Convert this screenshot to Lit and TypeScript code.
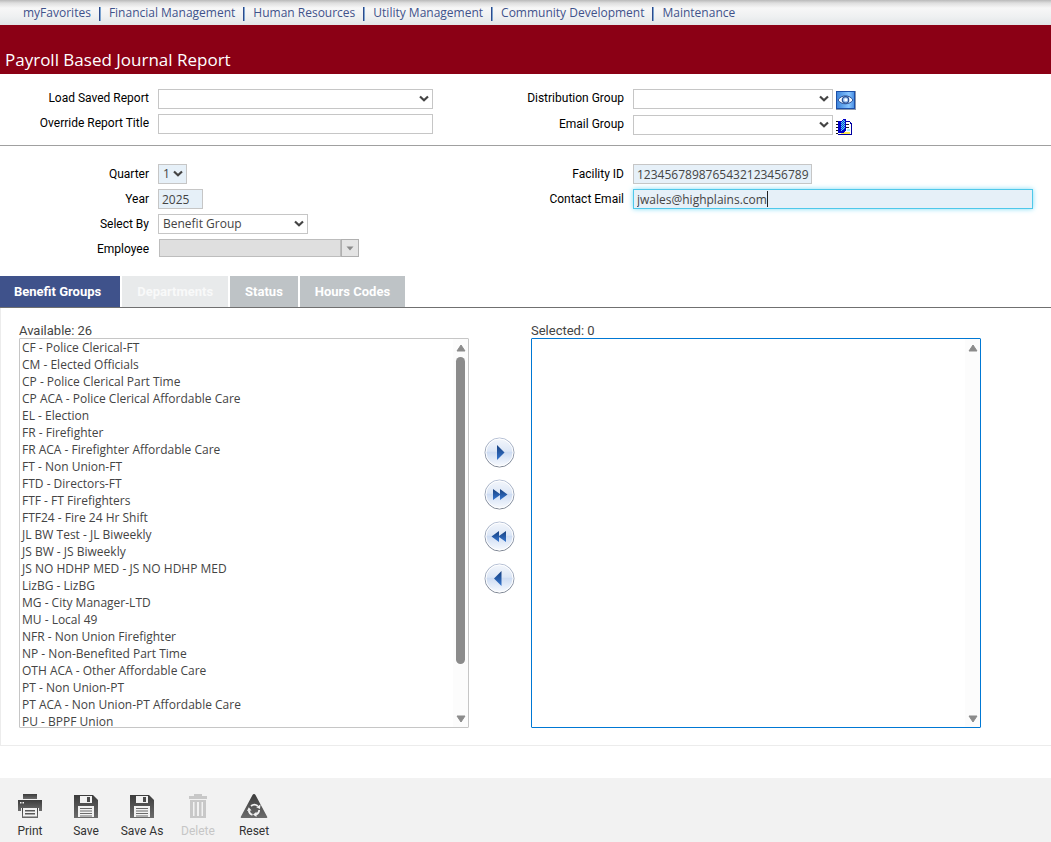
import { LitElement, html, css, svg, nothing } from "lit";
import { customElement, property } from "lit/decorators.js";
import { classMap } from "lit/directives/class-map.js";

const NAV = ["myFavorites", "Financial Management", "Human Resources", "Utility Management", "Community Development", "Maintenance"];

const GROUPS = [
  "CF - Police Clerical-FT",
  "CM - Elected Officials",
  "CP - Police Clerical Part Time",
  "CP ACA - Police Clerical Affordable Care",
  "EL - Election",
  "FR - Firefighter",
  "FR ACA - Firefighter Affordable Care",
  "FT - Non Union-FT",
  "FTD - Directors-FT",
  "FTF - FT Firefighters",
  "FTF24 - Fire 24 Hr Shift",
  "JL BW Test - JL Biweekly",
  "JS BW - JS Biweekly",
  "JS NO HDHP MED - JS NO HDHP MED",
  "LizBG - LizBG",
  "MG - City Manager-LTD",
  "MU - Local 49",
  "NFR - Non Union Firefighter",
  "NP - Non-Benefited Part Time",
  "OTH ACA - Other Affordable Care",
  "PT - Non Union-PT",
  "PT ACA - Non Union-PT Affordable Care",
  "PU - BPPF Union",
];

const chevron = html`<svg class="chevron" width="10" height="8" viewBox="0 0 10 8" aria-hidden="true">
  <path d="M1 1.5 L5 5.3 L9 1.5" fill="none" stroke="#444" stroke-width="2.2" />
</svg>`;

const eyeIcon = html`<svg width="20" height="19" viewBox="0 0 20 19" aria-hidden="true">
  <defs>
    <linearGradient id="eye-bg" x1="0" y1="0" x2="1" y2="0">
      <stop offset="0" stop-color="#3f86dc" />
      <stop offset="0.7" stop-color="#86c4ff" />
      <stop offset="1" stop-color="#4a90e4" />
    </linearGradient>
  </defs>
  <rect x="0" y="0" width="20" height="19" fill="#8c98ac" />
  <rect x="0" y="0" width="19" height="18" fill="#1c4fa8" />
  <rect x="1" y="1" width="17" height="16" fill="url(#eye-bg)" />
  <path d="M2 9 C5 3.500 14 3.500 17 9 C14 14 5 14 2 9Z" fill="#f4f9ff" stroke="#2a4f93" stroke-width="1" />
  <circle cx="9.500" cy="8.900" r="3.200" fill="#9cc2f0" stroke="#2a4f93" stroke-width="1.200" />
  <circle cx="9.800" cy="8.700" r="1.500" fill="#fff" />
</svg>`;

const bookIcon = html`<svg width="16" height="16" viewBox="0 0 16 16" aria-hidden="true" shape-rendering="crispEdges">
  <defs>
    <pattern id="weave" width="2" height="2" patternUnits="userSpaceOnUse">
      <rect width="2" height="2" fill="#0a3fd0" />
      <path d="M0 0H1V1H0Z M1 1H2V2H1Z" fill="#58d8f4" />
    </pattern>
  </defs>
  <path d="M3 2H13L15 4V15H3Z" fill="#fff" />
  <path d="M10 2H14V3H10Z M14 3H15V5H14Z M15 4H16V16H15Z M2 15H16V16H2Z" fill="#0000a0" />
  <path d="M5 13H14V15H5Z" fill="#ffe94a" />
  <path d="M10 5H13V6H10Z M10 8H13V9H10Z" fill="#222" />
  <path d="M11 10H14V12H11Z" fill="#a8f0f8" />
  <path d="M2 2H5L8 0H10V11L7 14H2Z" fill="#0000c8" />
  <path d="M5 3L8 1H9V10L5 12Z" fill="url(#weave)" />
  <path d="M0 2H2V3H0Z M0 5H2V6H0Z M0 8H2V9H0Z M0 11H2V12H0Z M0 14H2V15H0Z" fill="#111" />
</svg>`;

@customElement("nav-bar")
class NavBar extends LitElement {
  static styles = css`
    :host {
      display: block;
      background: linear-gradient(#b9b9b9 0, #dedede 3px, #f7f7f7 8px, #eef0f1 17px, #e2e5e7 25px);
    }
    .nav {
      display: flex;
      align-items: center;
      height: 25px;
      padding-left: 23px;
      font: 12px/24px "Open Sans", "Noto Sans", sans-serif;
    }
    .link {
      color: #3f528b;
      text-decoration: none;
      white-space: nowrap;
    }
    .sep {
      width: 1px;
      height: 14px;
      margin: 2px 8px 0;
      border-left: 1px solid #2d4a8c;
      background: #7aa3cf;
      box-sizing: content-box;
    }
  `;
  render() {
    return html`<nav class="nav">
      ${NAV.map((t, i) => html`${i ? html`<span class="sep"></span>` : nothing}<a class="link" href="#">${t}</a>`)}
    </nav>`;
  }
}

@customElement("move-button")
class MoveButton extends LitElement {
  @property() kind = "right";
  @property() label = "";
  static styles = css`
    :host {
      display: block;
    }
    .btn {
      display: block;
      padding: 0;
      border: 0;
      background: none;
    }
    .icon {
      display: block;
    }
  `;
  render() {
    const shapes: Record<string, string> = {
      right: "M13 8 L20.500 15.500 L13 23Z",
      allRight: "M9 10 L16 15 L16 10 L23.500 15.500 L16 21 L16 16 L9 21Z",
      allLeft: "M22 10 L15 15 L15 10 L7.500 15.500 L15 21 L15 16 L22 21Z",
      left: "M17.500 8 L10 15.500 L17.500 23Z",
    };
    return html`<button class="btn" aria-label=${this.label}>
      <svg class="icon" width="31" height="32" viewBox="0 0 31 32">
        <defs>
          <linearGradient id="face" x1="0" y1="0" x2="0" y2="1">
            <stop offset="0" stop-color="#f4f7fc" />
            <stop offset="0.45" stop-color="#dde7f6" />
            <stop offset="0.5" stop-color="#cfddf3" />
            <stop offset="1" stop-color="#fafcff" />
          </linearGradient>
          <linearGradient id="rim" x1="0" y1="0" x2="0" y2="1">
            <stop offset="0" stop-color="#b4bfd4" />
            <stop offset="1" stop-color="#767e8c" />
          </linearGradient>
          <linearGradient id="arrow" x1="0" y1="0" x2="0" y2="1">
            <stop offset="0" stop-color="#17407f" />
            <stop offset="1" stop-color="#3576d0" />
          </linearGradient>
        </defs>
        <circle cx="15.500" cy="15.500" r="14.500" fill="url(#face)" stroke="url(#rim)" />
        <circle cx="15.500" cy="15.500" r="13.500" fill="none" stroke="#fff" />
        <path d=${shapes[this.kind]} fill="url(#arrow)" />
      </svg>
    </button>`;
  }
}

@customElement("list-box")
class ListBox extends LitElement {
  @property() label = "";
  @property({ type: Number }) count = 0;
  @property({ attribute: false }) items: string[] = [];
  @property({ type: Boolean }) active = false;
  static styles = css`
    :host {
      display: block;
      flex: 0 1 450px;
      min-width: 0;
    }
    .caption {
      display: block;
      font: 13px/15px Roboto, sans-serif;
      color: #444;
    }
    .frame {
      display: flex;
      height: 388px;
      border: 1px solid #c6c6c6;
      border-radius: 1px;
      background: #fff;
    }
    .frame.active {
      border-color: #0078d4;
    }
    .list {
      flex: 1;
      min-width: 0;
      height: 388px;
      padding: 0;
      border: 0;
      outline: 0;
      overflow: hidden;
      background: none;
      color: #444;
      font: 12px/17px "Open Sans", "Noto Sans", sans-serif;
    }
    .item {
      height: 17px;
      min-height: 17px;
      padding: 0 2px;
      line-height: 17px;
    }
    .bar {
      display: flex;
      flex-direction: column;
      align-items: center;
      gap: 5px;
      width: 15px;
      padding: 5px 0 4px;
      box-sizing: border-box;
      background: #fcfcfc;
    }
    .track {
      flex: 1;
      width: 9px;
    }
    .thumb {
      height: 87%;
      border-radius: 5px;
      background: #8b8b8b;
    }
    .tip {
      display: block;
      flex: none;
    }
  `;
  render() {
    return html`<label class="caption" for="list">${this.label}: ${this.count}</label>
      <div class=${classMap({ frame: true, active: this.active })}>
        <select class="list" id="list" multiple>
          ${this.items.map((t) => html`<option class="item">${t}</option>`)}
        </select>
        <div class="bar" aria-hidden="true">
          <svg class="tip" width="10" height="8"><path d="M1 7 L5 1 L9 7Z" fill="#8b8b8b" stroke="#8b8b8b" stroke-linejoin="round" /></svg>
          <div class="track">${this.items.length ? html`<div class="thumb"></div>` : nothing}</div>
          <svg class="tip" width="10" height="8"><path d="M1 1 L5 7 L9 1Z" fill="#8b8b8b" stroke="#8b8b8b" stroke-linejoin="round" /></svg>
        </div>
      </div>`;
  }
}

const disk = svg`
  <path d="M0 1 H19 L24 6 V24 H0Z" fill="url(#ink)" />
  <path d="M6 2 H18 V9 H6Z" fill="#f2f2f2" />
  <path d="M13 3 H16 V8 H13Z" fill="#4a4a4a" />
  <path d="M4 12 H20 V23 H4Z" fill="#f2f2f2" />
  <path d="M6 14H18V15H6Z M6 16.500H18V17.500H6Z M6 19H18V20H6Z M6 21.500H18V22.500H6Z" fill="#6a6a6a" />`;

const TOOL_ICONS: Record<string, unknown> = {
  Print: svg`
    <path d="M5 0 H19 V5 H5Z" fill="url(#ink)" />
    <path d="M0 6 H24 V17 H21 V14 H3 V17 H0Z" fill="url(#ink)" />
    <path d="M2 8H3.500V9.500H2Z M4.500 8H6V9.500H4.500Z" fill="#f2f2f2" />
    <path d="M4 14 H20 V24 H4Z" fill="url(#ink)" />
    <path d="M5 14 H19 V22.500 H5Z" fill="#f2f2f2" />
    <path d="M7 16H17V17.500H7Z M7 19H17V20.500H7Z" fill="#5a5a5a" />`,
  Save: disk,
  "Save As": disk,
  Delete: svg`
    <path d="M8 0 H16 V2 H21 V5 H3 V2 H8Z" fill="#c8c8c8" />
    <path d="M4 6 H20 V24 H4Z" fill="#c8c8c8" />
    <path d="M7 8H8.500V22H7Z M11 8H13V22H11Z M15.500 8H17V22H15.500Z" fill="#f2f2f2" />`,
  Reset: svg`
    <path d="M12 0 Q13 0 13.500 1 L25.300 23 Q25.500 24 24.500 24 H-0.500 Q-1.500 24 -1.300 23 L10.500 1 Q11 0 12 0Z" fill="url(#ink)" />
    <path d="M6.800 16.500 A5.300 5.300 0 0 0 10.500 20.800 M14 20.700 A5.300 5.300 0 0 0 17.200 16 M15.800 12 A5.300 5.300 0 0 0 9 12" fill="none" stroke="#f2f2f2" stroke-width="1.800" />
    <path d="M5 17 L6.800 13.300 L9.500 16.500Z M14.500 17.800 V23 L11 20.500Z M18.500 10.500 L18 15 L14.300 13.300Z" fill="#f2f2f2" />`,
};

@customElement("tool-bar")
class ToolBar extends LitElement {
  static styles = css`
    :host {
      display: block;
      background: #f2f2f2;
    }
    .bar {
      display: flex;
      padding: 16px 2px 3px;
    }
    .tool {
      display: flex;
      flex-direction: column;
      align-items: center;
      gap: 5px;
      width: 56px;
      padding: 0;
      border: 0;
      background: none;
      color: #333;
      font: 12px/16px Roboto, sans-serif;
      white-space: nowrap;
    }
    .tool:disabled {
      color: #c6c6c6;
    }
    .icon {
      display: block;
      overflow: visible;
    }
  `;
  render() {
    return html`<div class="bar">
      ${Object.keys(TOOL_ICONS).map(
        (name) => html`<button class="tool" ?disabled=${name === "Delete"}>
          <svg class="icon" width="24" height="24" viewBox="0 0 24 24" aria-hidden="true">
            <defs>
              <linearGradient id="ink" x1="0" y1="0" x2="0" y2="1">
                <stop offset="0" stop-color="#3c3c3c" />
                <stop offset="1" stop-color="#6c6c6c" />
              </linearGradient>
            </defs>
            ${TOOL_ICONS[name]}
          </svg>
          <span>${name}</span>
        </button>`
      )}
    </div>`;
  }
}

@customElement("app-root")
class AppRoot extends LitElement {
  static styles = css`
    :host {
      display: flex;
      flex-direction: column;
      min-height: 100vh;
      background: #fff;
      font-family: Roboto, sans-serif;
      color: #444;
    }
    .title {
      margin: 0;
      padding: 23px 5px 2px;
      background: #8b0015;
      color: #fff;
      font: 17px/24px "Open Sans", "Noto Sans", sans-serif;
    }
    .form {
      display: grid;
      grid-template-columns: minmax(475px, 45fr) 55fr;
    }
    .head {
      padding: 15px 0 7px;
      border-bottom: 1px solid #a0a0a0;
    }
    .params {
      padding: 18px 0 17px;
    }
    .col {
      display: flex;
      flex-direction: column;
      gap: 5px;
    }
    .col.tight {
      gap: 3px;
    }
    .field {
      display: grid;
      grid-template-columns: 149px minmax(0, 1fr);
      column-gap: 9px;
      align-items: start;
    }
    .name {
      text-align: right;
      font-size: 12px;
      line-height: 20px;
      color: #000;
    }
    .head .name {
      line-height: 19px;
    }
    .line {
      display: flex;
      align-items: flex-start;
      gap: 3px;
    }
    .pick {
      display: grid;
      align-items: center;
    }
    .pick > * {
      grid-area: 1 / 1;
    }
    .chevron {
      justify-self: end;
      margin-right: 4px;
      pointer-events: none;
    }
    .box {
      box-sizing: border-box;
      width: 100%;
      height: 20px;
      margin: 0;
      padding: 0 4px;
      border: 1px solid #c6c6c6;
      border-radius: 0;
      outline: 0;
      appearance: none;
      background: #fff;
      color: #444;
      font: 12px/18px "Open Sans", "Noto Sans", sans-serif;
    }
    input.box {
      padding: 0 2px 0 3px;
    }
    .box.req {
      background: #e6f0f8;
    }
    .w275 { width: 275px; }
    .w200 { width: 200px; }
    .w179 { width: 179px; }
    .w150 { width: 150px; }
    .w45 { width: 45px; }
    .w29 { width: 29px; }
    .email {
      position: relative;
      flex: 0 1 400px;
    }
    .email .box {
      display: block;
      border-color: #4fc8ea;
      box-shadow: 0 0 5px #7fdcf5;
    }
    .caret {
      position: absolute;
      left: 134px;
      top: 2px;
      width: 1px;
      height: 16px;
      background: #222;
    }
    .mini {
      display: grid;
      place-items: center;
      height: 23px;
      padding: 0;
      border: 0;
      background: none;
    }
    .combo {
      display: flex;
      width: 200px;
      height: 18px;
      margin-left: 1px;
    }
    .combo .box {
      flex: 1;
      height: 18px;
      background: #dfdfdf;
      border-color: #bdbdbd;
    }
    .drop {
      display: grid;
      place-items: center;
      box-sizing: border-box;
      width: 18px;
      padding: 0;
      border: 1px solid #b0b0b0;
      border-radius: 0;
      background: #e4e4e4;
    }
    .tabs {
      display: flex;
      gap: 2px;
      border-bottom: 1px solid #707070;
    }
    .tab {
      height: 31px;
      padding: 0 15px;
      border: 0;
      background: #bec3c6;
      color: #fff;
      font: 700 13px/31px Roboto, sans-serif;
    }
    .tab.on {
      padding: 0 19px 0 14px;
      background: #3f528b;
    }
    .tab:disabled {
      background: #e8eaeb;
      color: #f8f9f9;
    }
    .panel {
      display: flex;
      align-items: flex-start;
      padding: 15px 18px 17px;
      border: 1px solid #ececec;
      border-width: 0 0 1px 1px;
      margin-bottom: 32px;
    }
    .moves {
      display: flex;
      flex-direction: column;
      gap: 10px;
      padding: 114px 16px 0 15px;
    }
    .foot {
      margin-top: auto;
    }
  `;

  private pick(id: string, width: string, value = "", extra = "") {
    return html`<span class="pick ${width}">
      <select class="box ${extra}" id=${id}><option>${value}</option></select>${chevron}
    </span>`;
  }

  private field(id: string, name: string, control: unknown) {
    return html`<div class="field">
      <label class="name" for=${id}>${name}</label>
      <div class="line">${control}</div>
    </div>`;
  }

  render() {
    return html`
      <nav-bar></nav-bar>
      <h1 class="title">Payroll Based Journal Report</h1>
      <div class="form head">
        <div class="col">
          ${this.field("saved", "Load Saved Report", this.pick("saved", "w275"))}
          ${this.field("override", "Override Report Title", html`<input class="box w275" id="override" />`)}
        </div>
        <div class="col tight">
          ${this.field("dist", "Distribution Group", html`${this.pick("dist", "w200")}<button class="mini" aria-label="View">${eyeIcon}</button>`)}
          ${this.field("mail", "Email Group", html`${this.pick("mail", "w200")}<button class="mini" aria-label="Address book">${bookIcon}</button>`)}
        </div>
      </div>
      <div class="form params">
        <div class="col">
          ${this.field("quarter", "Quarter", this.pick("quarter", "w29", "1", "req"))}
          ${this.field("year", "Year", html`<input class="box req w45" id="year" value="2025" />`)}
          ${this.field("by", "Select By", this.pick("by", "w150", "Benefit Group"))}
          ${this.field(
            "employee",
            "Employee",
            html`<div class="combo">
              <input class="box" id="employee" disabled />
              <button class="drop" disabled aria-label="Open employee list">
                <svg width="8" height="5" viewBox="0 0 8 5"><path d="M0.500 0.500H7.500L4 4.500Z" fill="#8a8a8a" /></svg>
              </button>
            </div>`
          )}
        </div>
        <div class="col">
          ${this.field("facility", "Facility ID", html`<input class="box req w179" id="facility" value="1234567898765432123456789" />`)}
          ${this.field(
            "email",
            "Contact Email",
            html`<div class="email"><input class="box req" id="email" value="jwales@highplains.com" /><span class="caret"></span></div>`
          )}
        </div>
      </div>
      <div class="tabs" role="tablist">
        <button class="tab on" role="tab">Benefit Groups</button>
        <button class="tab" role="tab" disabled>Departments</button>
        <button class="tab" role="tab">Status</button>
        <button class="tab" role="tab">Hours Codes</button>
      </div>
      <div class="panel">
        <list-box label="Available" .count=${26} .items=${GROUPS}></list-box>
        <div class="moves">
          <move-button kind="right" label="Add"></move-button>
          <move-button kind="allRight" label="Add all"></move-button>
          <move-button kind="allLeft" label="Remove all"></move-button>
          <move-button kind="left" label="Remove"></move-button>
        </div>
        <list-box label="Selected" .count=${0} active></list-box>
      </div>
      <tool-bar class="foot"></tool-bar>
    `;
  }
}
